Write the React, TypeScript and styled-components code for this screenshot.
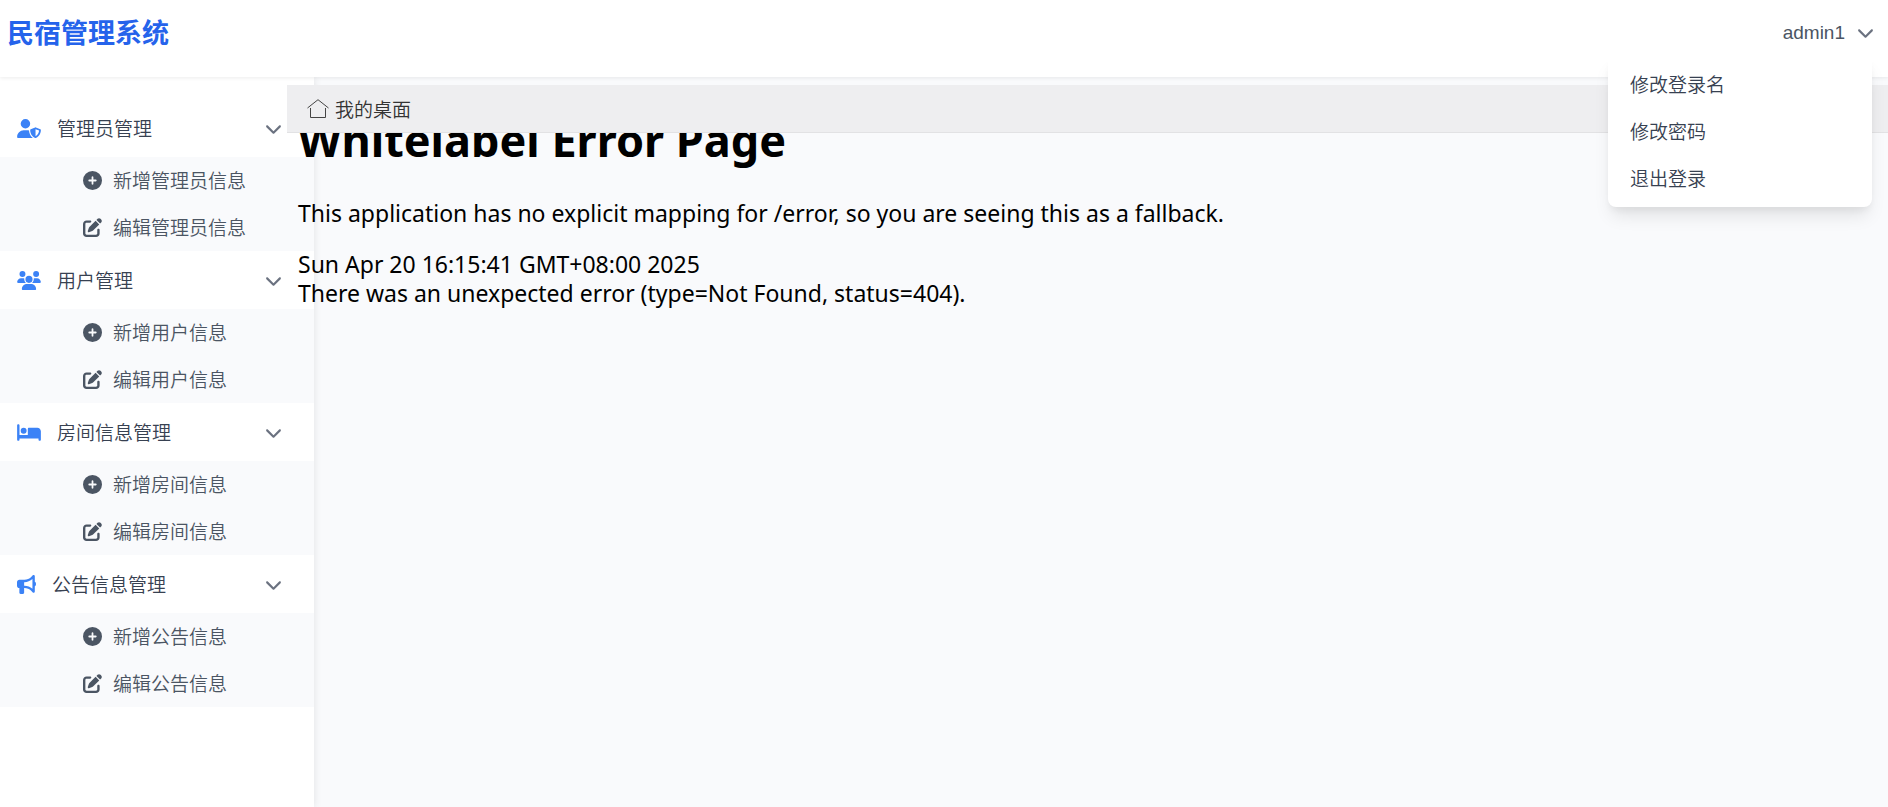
import React from "react";
import styled, { createGlobalStyle } from "styled-components";
import type { IconType } from "react-icons";
import {
  FaBed,
  FaBullhorn,
  FaChevronDown,
  FaCirclePlus,
  FaPenToSquare,
  FaUserShield,
  FaUsers,
} from "react-icons/fa6";

const GlobalStyle = createGlobalStyle`
  *, *::before, *::after { box-sizing: border-box; }
  body {
    margin: 0;
    background: #f9fafc;
    color: #374151;
    font: 350 19px/29px "Liberation Sans", "Noto Sans CJK SC", sans-serif;
  }
  h1, p, ul { margin: 0; padding: 0; }
  ul { list-style: none; }
  a { color: inherit; text-decoration: none; }
  button {
    border: 0;
    background: none;
    color: inherit;
    font: inherit;
    text-align: left;
    cursor: pointer;
  }
`;

const Page = styled.div`
  display: flex;
  flex-direction: column;
  min-height: 100vh;
`;

const Header = styled.header`
  position: relative;
  z-index: 3;
  display: flex;
  justify-content: space-between;
  align-items: flex-start;
  height: 77px;
  padding: 12px 14px 0 7px;
  background: #fff;
  box-shadow: 0 1px 4px rgba(0, 0, 0, 0.08);
`;

const Brand = styled.a`
  && { color: #2563eb; }
  font-size: 27px;
  line-height: 44px;
  font-weight: 700;
`;

const Account = styled.div`
  position: relative;
`;

const AccountButton = styled.button`
  display: flex;
  align-items: center;
  gap: 12px;
  height: 40px;
  padding: 0;
  color: #4b5563;
`;

const Chevron = styled(FaChevronDown)`
  width: 17px;
  height: 17px;
  color: #6b7280;
`;

const Menu = styled.ul`
  && { padding: 6px 0 4px; }
  position: absolute;
  top: 44px;
  right: 2px;
  width: 264px;
  border-radius: 8px;
  background: #fff;
  box-shadow: 0 12px 18px -4px rgba(0, 0, 0, 0.1), 0 5px 7px -2px rgba(0, 0, 0, 0.05);
`;

const MenuLink = styled.a`
  display: block;
  padding: 9px 22px;
`;

const Body = styled.div`
  display: flex;
  flex: 1;
`;

const Sidebar = styled.nav`
  flex: none;
  width: 314px;
  padding-top: 22px;
  background: #fff;
  box-shadow: 0 0 8px rgba(0, 0, 0, 0.1);
`;

const GroupButton = styled.button<{ $iconWidth: number }>`
  display: flex;
  align-items: center;
  gap: 16px;
  width: 100%;
  height: 58px;
  padding: 0 32px 0 17px;

  > svg:first-child {
    flex: none;
    width: ${(props) => props.$iconWidth}px;
    height: 19px;
    color: #3b82f6;
  }
`;

const Label = styled.span`
  flex: 1;
  padding-top: 2px;
`;

const SubList = styled.ul`
  background: #f9fafc;
`;

const SubLink = styled.a`
  display: flex;
  align-items: center;
  gap: 11px;
  height: 47px;
  padding-left: 83px;
  && { color: #4b5563; }

  > svg {
    width: 19px;
    height: 19px;
  }
`;

const Content = styled.main`
  position: relative;
  z-index: 2;
  flex: 1;
  min-width: 0;
  margin: 8px 0 0 -27px;
`;

const TabBar = styled.div`
  position: relative;
  z-index: 1;
  height: 48px;
  border-bottom: 1px solid #e2e2e4;
  background: #eeeef0;
`;

const Tab = styled.a`
  display: inline-flex;
  align-items: center;
  gap: 6px;
  height: 48px;
  padding: 0 20px;
  && { color: #333; }
`;

const Frame = styled.section`
  margin-top: -25px;
  padding: 0 11px;
  color: #000;
  font: 400 23px/29px "Noto Sans", sans-serif;
`;

const ErrorTitle = styled.h1`
  font-size: 45px;
  line-height: 64px;
  font-weight: 700;
`;

const ErrorText = styled.p`
  && { margin: 27px 0 22px; }
`;

const HomeIcon = () => (
  <svg width="22" height="20" viewBox="0 0 22 20" fill="none" stroke="#444" aria-hidden="true">
    <path d="M0.5 9 L11 0.7 L21.5 9" />
    <path d="M3.5 9 V18.5 H18.5 V9" />
  </svg>
);

interface Group {
  title: string;
  icon: IconType;
  iconWidth: number;
  subject: string;
}

const groups: Group[] = [
  { title: "管理员管理", icon: FaUserShield, iconWidth: 24, subject: "管理员信息" },
  { title: "用户管理", icon: FaUsers, iconWidth: 24, subject: "用户信息" },
  { title: "房间信息管理", icon: FaBed, iconWidth: 24, subject: "房间信息" },
  { title: "公告信息管理", icon: FaBullhorn, iconWidth: 19, subject: "公告信息" },
];

const accountActions = ["修改登录名", "修改密码", "退出登录"];

export default function App() {
  return (
    <Page>
      <GlobalStyle />
      <Header>
        <Brand href="#">民宿管理系统</Brand>
        <Account>
          <AccountButton type="button" aria-expanded="true">
            admin1
            <Chevron />
          </AccountButton>
          <Menu>
            {accountActions.map((label) => (
              <li key={label}>
                <MenuLink href="#">{label}</MenuLink>
              </li>
            ))}
          </Menu>
        </Account>
      </Header>
      <Body>
        <Sidebar>
          {groups.map(({ title, icon: Icon, iconWidth, subject }) => (
            <React.Fragment key={title}>
              <GroupButton type="button" aria-expanded="true" $iconWidth={iconWidth}>
                <Icon />
                <Label>{title}</Label>
                <Chevron />
              </GroupButton>
              <SubList>
                <li>
                  <SubLink href="#">
                    <FaCirclePlus />
                    <Label>新增{subject}</Label>
                  </SubLink>
                </li>
                <li>
                  <SubLink href="#">
                    <FaPenToSquare />
                    <Label>编辑{subject}</Label>
                  </SubLink>
                </li>
              </SubList>
            </React.Fragment>
          ))}
        </Sidebar>
        <Content>
          <TabBar>
            <Tab href="#">
              <HomeIcon />
              <Label>我的桌面</Label>
            </Tab>
          </TabBar>
          <Frame>
            <ErrorTitle>Whitelabel Error Page</ErrorTitle>
            <ErrorText>
              This application has no explicit mapping for /error, so you are seeing this as a
              fallback.
            </ErrorText>
            <p>Sun Apr 20 16:15:41 GMT+08:00 2025</p>
            <p>There was an unexpected error (type=Not Found, status=404).</p>
          </Frame>
        </Content>
      </Body>
    </Page>
  );
}
